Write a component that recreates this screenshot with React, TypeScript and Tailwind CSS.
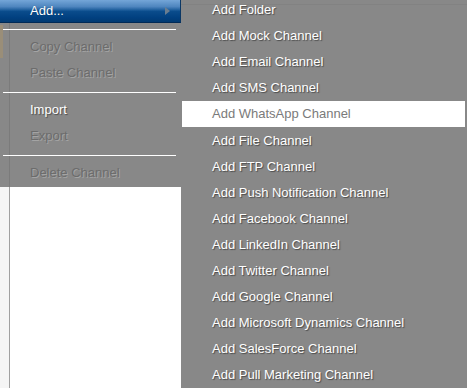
import React from "react";

const font = { fontFamily: '"Liberation Sans", Arial, sans-serif' };

function Sep() {
  return (
    <div className="h-[11px] pt-[6px] pl-[3px] pr-[5px]">
      <div className="h-px bg-white" />
    </div>
  );
}

function Item({ label, disabled }: { label: string; disabled?: boolean }) {
  return (
    <div
      className={
        "h-[26px] flex items-center pl-[30px] text-[13px] " +
        (disabled
          ? "text-[#6c6c6c] [text-shadow:1px_1px_0_#a4a4a4]"
          : "text-white [text-shadow:1px_1px_1px_rgba(0,0,0,0.45)]")
      }
    >
      {label}
    </div>
  );
}

const subItems = [
  "Add Folder",
  "Add Mock Channel",
  "Add Email Channel",
  "Add SMS Channel",
  "Add WhatsApp Channel",
  "Add File Channel",
  "Add FTP Channel",
  "Add Push Notification Channel",
  "Add Facebook Channel",
  "Add LinkedIn Channel",
  "Add Twitter Channel",
  "Add Google Channel",
  "Add Microsoft Dynamics Channel",
  "Add SalesForce Channel",
  "Add Pull Marketing Channel",
];

export default function App() {
  return (
    <div className="flex w-[467px] h-[388px] overflow-hidden bg-white" style={font}>
      <div className="w-[181px] flex flex-col">
        <div className="relative bg-[#888888] h-[187px]">
          <div className="absolute left-[9px] top-[23px] bottom-0 w-px bg-[#7b7b7b]" />
          <div className="absolute left-0 top-[25px] h-[33px] w-[3px] bg-[#9a8e78]" />
          <div className="relative">
            <div className="h-[23px] flex items-center pl-[30px] text-[13px] text-white border-r border-r-[#0b3764] border-b border-b-[#012a56] bg-[linear-gradient(to_bottom,#74a6d8_0%,#4f86bf_30%,#1f5f9d_45%,#0a4c8c_52%,#014080_80%,#013a72_100%)] [text-shadow:0_0_1px_rgba(0,0,0,0.3)]">
              <span className="flex-1">Add...</span>
              <span className="mr-[10px] w-0 h-0 border-y-[4px] border-y-transparent border-l-[5px] border-l-[#6a7d90]" />
            </div>
            <Sep />
            <Item label="Copy Channel" disabled />
            <Item label="Paste Channel" disabled />
            <Sep />
            <Item label="Import" />
            <Item label="Export" disabled />
            <Sep />
            <Item label="Delete Channel" disabled />
          </div>
        </div>
        <div className="flex-1 flex">
          <div className="w-[9px] bg-[#f5f5f5]" />
          <div className="w-px bg-[#a0a0a0]" />
          <div className="flex-1 bg-white" />
        </div>
      </div>
      <div className="relative flex-1 bg-[#888888]">
        <div className="absolute left-0 right-0 top-[4px] h-px bg-[#828282]" />
        <div className="relative -mt-[3px]">
          {subItems.map((s) => {
            const hi = s === "Add WhatsApp Channel";
            return (
              <div
                key={s}
                className={
                  "h-[26px] flex items-center text-[13px] " +
                  (hi
                    ? "bg-white ml-px mr-[2px] pl-[30px] text-[#7a7a7a] h-[25px] mb-px"
                    : "pl-[31px] text-white [text-shadow:1px_1px_1px_rgba(0,0,0,0.45)]")
                }
              >
                {s}
              </div>
            );
          })}
        </div>
      </div>
    </div>
  );
}
